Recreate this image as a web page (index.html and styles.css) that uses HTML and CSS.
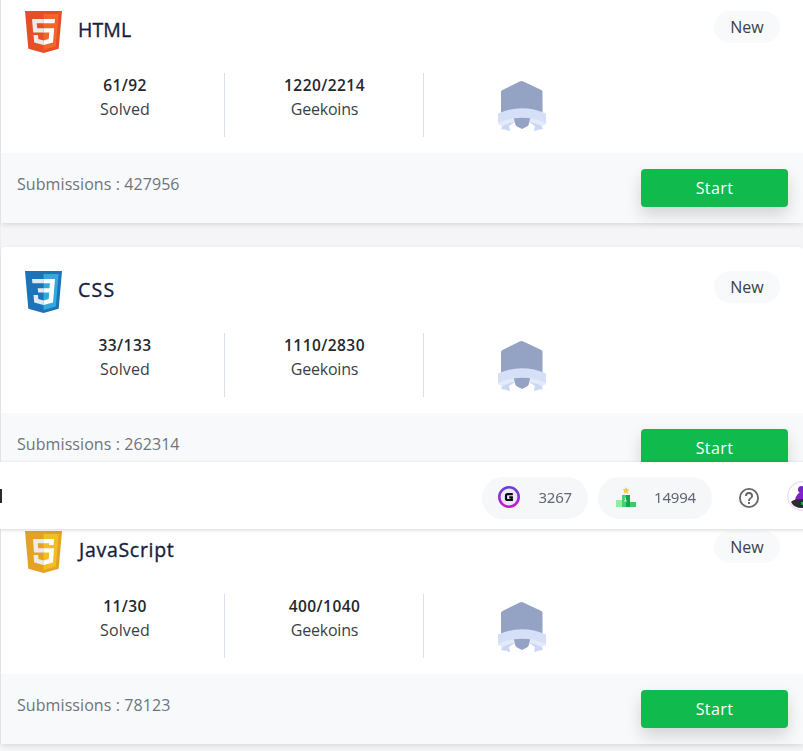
FILE: index.html
```
<!DOCTYPE html>
<html lang="en">
<head>
<meta charset="utf-8">
<title>Practice</title>
<link rel="stylesheet" href="styles.css">
</head>
<body>
<svg class="defs" aria-hidden="true">
  <symbol id="badge" viewBox="0 0 50 52">
    <path fill="#94a3c4" d="M22.700 1.500a4 4 0 0 1 3.600 0l18 8.500c1 .6 1.200 1.400 1.200 2.600V38H4V12.600C4 11.400 4.600 10.600 5.600 10z"/>
    <path fill="#e3eafa" d="M2 41Q10 38 19 38v4q-4 2-7 4l1 5-5-1.500-4-.5 1-3-4-2zM48 41Q40 38 31 38v4q4 2 7 4l-1 5 5-1.500 4-.5-1-3 4-2z"/>
    <path fill="#cbd7f3" d="M4 47Q10 43 18 42q-4 2-6 4l1 5-5-1.500-4-.5 1.500-1.500zM46 47Q40 43 32 42q4 2 6 4l-1 5 5-1.500 4-.5-1.500-1.500z"/>
    <path fill="#94a3c4" d="M16.500 37h17q-1 4-2 8-.5 1-2.500 2l-4 2-4-2q-2-1-2.500-2-1-4-2-8z"/>
    <path fill="#d5e0f8" d="M1 33.500Q25 23 49 33.500V43Q25 32.500 1 43z"/>
  </symbol>
</svg>

<main class="courses">
  <article class="card">
    <div class="card-body">
      <header class="card-head">
        <svg class="logo" viewBox="0 0 37 42"><path fill="#e44f26" d="M0 0h37l-3.300 37.700L18.500 42 3.300 37.700z"/><path fill="#f1662a" d="M18.500 3h15.200l-2.900 32.500-12.300 3.500z"/><path fill="#ebebeb" d="M18.500 8H7l1.200 13.500h10.300v-4.300h-6.300l-.5-4.900h6.800zM18.500 29.500l-5.200-1.500-.3-4H8.500l.7 7.400 9.300 2.700z"/><path fill="#fff" d="M18.500 8H30l-.4 4.300H18.500zM18.500 17.200h10.700L28 31.400l-9.500 2.700v-4.600l5.200-1.500.5-6.500h-5.700z"/></svg>
        <h2 class="title title-html">HTML</h2>
        <span class="tag">New</span>
      </header>
      <div class="stats">
        <div class="stat"><strong>61/92</strong><span class="solved">Solved</span></div>
        <div class="stat"><strong>1220/2214</strong><span class="coins">Geekoins</span></div>
        <div class="award"><svg class="badge"><use href="#badge"/></svg></div>
      </div>
    </div>
    <footer class="card-foot"><span class="subs">Submissions : 427956</span><button class="start">Start</button></footer>
  </article>

  <article class="card">
    <div class="card-body">
      <header class="card-head">
        <svg class="logo" viewBox="0 0 37 42"><path fill="#1b73ba" d="M0 0h37l-3.300 37.700L18.500 42 3.300 37.700z"/><path fill="#35a9dc" d="M18.500 3h15.200l-2.900 32.500-12.300 3.500z"/><path fill="#e5e9ed" d="M7 8h11.500v4.300H7.400zM12.700 17.200h5.800v4.300h-5.400zM8.500 24H13l.3 4 5.200 1.500v4.600l-9.300-2.700z"/><path fill="#fff" d="M18.500 8H30l-2 23.400-9.500 2.700v-4.600l5.200-1.500.5-6.500h-5.700v-4.300h6l.4-4.900h-6.400z"/></svg>
        <h2 class="title title-css">CSS</h2>
        <span class="tag">New</span>
      </header>
      <div class="stats">
        <div class="stat"><strong>33/133</strong><span class="solved">Solved</span></div>
        <div class="stat"><strong>1110/2830</strong><span class="coins">Geekoins</span></div>
        <div class="award"><svg class="badge"><use href="#badge"/></svg></div>
      </div>
    </div>
    <footer class="card-foot"><span class="subs">Submissions : 262314</span><button class="start">Start</button></footer>
  </article>

  <article class="card">
    <div class="card-body">
      <header class="card-head">
        <svg class="logo" viewBox="0 0 37 42"><path fill="#e4a126" d="M0 0h37l-3.300 37.700L18.500 42 3.300 37.700z"/><path fill="#f2bf22" d="M18.500 3h15.200l-2.900 32.500-12.300 3.500z"/><path fill="#ebebeb" d="M18.500 8H8l1 13.500h9.500v-4.300h-5.300l-.4-4.900h5.700zM18.500 29.500l-5-1.500-.3-4H8.500l.7 7.400 9.300 2.700z"/><path fill="#fff" d="M18.500 8H29l-.4 6h-4.500l.1-1.700h-5.700zM18.500 17.200H29L28 31.400l-9.500 2.700v-4.600l5.200-1.500.5-6.500h-5.700z"/></svg>
        <h2 class="title title-js">JavaScript</h2>
        <span class="tag">New</span>
      </header>
      <div class="stats">
        <div class="stat"><strong>11/30</strong><span class="solved">Solved</span></div>
        <div class="stat"><strong>400/1040</strong><span class="coins">Geekoins</span></div>
        <div class="award"><svg class="badge"><use href="#badge"/></svg></div>
      </div>
    </div>
    <footer class="card-foot"><span class="subs">Submissions : 78123</span><button class="start">Start</button></footer>
  </article>
</main>

<nav class="bar">
  <span class="menu-edge"></span>
  <div class="pill pill-coins">
    <svg width="22" height="22" viewBox="0 0 22 22"><defs><linearGradient id="ring" x2="0" y2="1"><stop stop-color="#5f43dc"/><stop offset="1" stop-color="#cb17cf"/></linearGradient></defs><circle cx="11" cy="11" r="9.700" fill="#efe6fb" stroke="url(#ring)" stroke-width="2.600"/><path d="M14.800 8.200H9.600Q8 8.200 8 9.800v2.700Q8 14 9.600 14h4.200v-2.600h-2.600" fill="none" stroke="#0b0b12" stroke-width="2.200"/></svg>
    <span>3267</span>
  </div>
  <div class="pill pill-rank">
    <svg width="20" height="20" viewBox="0 0 20 20"><path fill="#fbc343" d="M10 0l1 2.300 2.500.3-1.900 1.700.6 2.500L10 5.500 7.800 6.800l.6-2.500-1.900-1.700L9 2.300z"/><path fill="#92ee9e" d="M0 13h6v7H0z"/><path fill="#48cf70" d="M6 8h6v12H6z"/><path fill="#16a54e" d="M10 8h4v12h-4z"/><path fill="#38ce67" d="M14 15h6v5h-6z"/><path d="M8.500 11h1v3m-1.500 0h3" fill="none" stroke="#b5f6c2"/></svg>
    <span>14994</span>
  </div>
  <svg class="help" viewBox="0 0 24 24"><path fill="#666" d="M11 18h2v-2h-2zm1-16a10 10 0 1 0 0 20 10 10 0 0 0 0-20zm0 18.200a8.200 8.200 0 1 1 0-16.400 8.200 8.200 0 0 1 0 16.400zM12 6a4 4 0 0 0-4 4h1.900a2.100 2.100 0 0 1 4.200 0c0 2-3 1.800-3 5h1.900c0-2.300 3-2.500 3-5a4 4 0 0 0-4-4z"/></svg>
  <svg class="avatar" viewBox="0 0 30 30"><circle cx="15" cy="15" r="14.300" fill="#fff" stroke="#eadff5" stroke-width="1.400"/><circle cx="14.500" cy="8.500" r="3.500" fill="#7a22c9"/><path fill="#8220d0" d="M8 19q2-8 7-8t7 8z"/><path fill="#2c2b30" d="M4 21q2-3 11-3t11 3q-3 6-11 6T4 21z"/><path fill="#219653" d="M14 21h2v3h-2z"/></svg>
</nav>
</body>
</html>
```
FILE: styles.css
```
* { box-sizing: border-box; }
body {
  margin: 0;
  height: 751px;
  overflow: hidden;
  background: #f5f5f7;
  color: #3a3f46;
  font: 16px/24px "Open Sans", sans-serif;
}
.defs { position: absolute; width: 0; height: 0; }
.courses {
  display: flex;
  flex-direction: column;
  gap: 24px;
  margin-top: -13px;
  border-left: 1px solid #eeeef0;
}
.card {
  flex: none;
  border-radius: 4px;
  background: #fff;
  box-shadow: 0 2px 5px rgba(0, 0, 0, .11);
}
.card-body { height: 166.200px; padding: 24px; }
.card-head { display: flex; height: 42px; }
.logo { width: 37px; height: 42px; margin-right: 16px; }
.title {
  margin: 4px 0 0;
  color: #141e40;
  font-size: 19.500px;
  font-weight: 500;
  line-height: 30px;
  -webkit-text-stroke: .35px #141e40;
}
.title-html { letter-spacing: .1px; }
.title-css { letter-spacing: 1.300px; }
.title-js { letter-spacing: .7px; text-indent: 1px; }
.tag {
  width: 66px;
  height: 32px;
  margin-left: auto;
  margin-right: -1px;
  border-radius: 16px;
  background: #f7f9fb;
  text-align: center;
  line-height: 33px;
}
.stats {
  display: grid;
  grid-template-columns: 200px 199px 196px;
  height: 64px;
  margin-top: 20.200px;
}
.stat {
  display: flex;
  flex-direction: column;
  align-items: center;
  padding-left: 1px;
  border-right: 1px solid #d9e0e9;
}
.stat strong { color: #24282c; font-size: 15.500px; font-weight: 600; letter-spacing: .45px; }
.solved { letter-spacing: .1px; }
.coins { letter-spacing: -.2px; }
.award { padding: 7px 0 0 73px; }
.badge { display: block; width: 50px; height: 52px; }
.card-foot {
  display: flex;
  justify-content: space-between;
  height: 70px;
  padding: 16px 15px 16px 16px;
  background: #f8f9fb;
  color: #6c757d;
}
.subs { line-height: 31px; letter-spacing: .08px; }
.start {
  width: 147px;
  height: 38px;
  padding: 0;
  border: 0;
  border-radius: 4px;
  background: #11ba4c;
  box-shadow: 0 8px 16px rgba(0, 0, 0, .15);
  color: #fff;
  font: 16px/38px "Open Sans", sans-serif;
  letter-spacing: .4px;
}
.bar {
  position: fixed;
  top: 462px;
  left: 0;
  display: flex;
  align-items: center;
  width: 820px;
  height: 67px;
  background: #fff;
  box-shadow: 0 1px 4px rgba(0, 0, 0, .16);
}
.menu-edge { width: 2px; height: 14px; margin-right: 480px; background: #2b2b2b; }
.pill {
  display: flex;
  align-items: center;
  justify-content: space-between;
  height: 42px;
  margin-top: 5px;
  padding: 0 16px;
  border-radius: 21px;
  background: #f6f7f9;
  color: #606775;
  font-family: "Noto Sans", sans-serif;
  font-size: 15px;
  letter-spacing: -.2px;
}
.pill-coins { width: 106px; margin-right: 10px; }
.pill-rank { width: 114px; padding-left: 18px; }
.pill svg { margin-top: -2px; }
.pill span { margin-top: -2px; }
.help { flex: none; width: 24px; height: 24px; margin: 5px 0 0 25px; }
.avatar { flex: none; width: 30px; height: 30px; margin: 0 0 0 26px; }
```
